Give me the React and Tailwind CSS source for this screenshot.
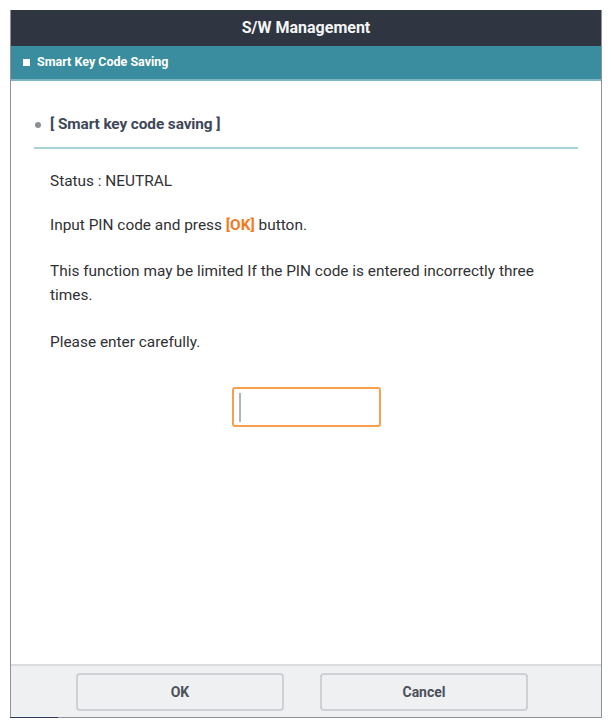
import React from "react";

export default function App() {
  return (
    <div className="w-[611px] h-[727px] bg-white pt-[10px] pl-[10px]" style={{ fontFamily: "Roboto, 'Liberation Sans', sans-serif" }}>
      <div className="w-[592px] h-[708px] flex flex-col border-l border-r border-b border-[#8f9296] relative">
        <div className="h-[36px] bg-[#2f3641] flex items-center justify-center text-[#f4f5f6] font-bold text-[16px]">
          S/W Management
        </div>
        <div className="h-[35px] bg-[#3a8d9e] border-b-2 border-[#7db6c2] flex items-center pl-[12px] gap-[7px]">
          <div className="w-[7px] h-[7px] bg-white"></div>
          <span className="text-white font-bold text-[12.5px]">Smart Key Code Saving</span>
        </div>
        <div className="flex-1 bg-white px-[23px] pt-[34px]">
          <div className="flex items-center h-[20px] pl-[1px]">
            <div className="w-[6px] h-[6px] rounded-full bg-[#8c9096]"></div>
            <span className="ml-[9px] font-bold text-[15.4px] text-[#3e4859] tracking-[-0.1px]">[ Smart key code saving ]</span>
          </div>
          <div className="mt-[12px] h-[2px] bg-[#a9d3db]"></div>
          <div className="pl-[16px] text-[15.4px] text-[#2f3134]">
            <div className="mt-[22px] leading-[20px]">Status : NEUTRAL</div>
            <div className="mt-[24px] leading-[20px]">
              Input PIN code and press <span className="text-[#f47a1f] font-bold">[OK]</span> button.
            </div>
            <div className="mt-[24px] leading-[24px] pr-[20px]">
              This function may be limited If the PIN code is entered incorrectly three times.
            </div>
            <div className="mt-[25px] leading-[20px]">Please enter carefully.</div>
          </div>
          <div className="mt-[35px] flex justify-center">
            <div className="w-[149px] h-[40px] border-2 border-[#f7a04c] rounded-[3px] flex items-center pl-[5px]">
              <div className="w-[2px] h-[29px] bg-[#b4b4b4]"></div>
            </div>
          </div>
        </div>
        <div className="h-[53px] bg-[#eff0f2] border-t-2 border-[#d9dbde] flex items-start pt-[7px] pl-[65px] gap-[36px]">
          <div className="w-[208px] h-[38px] border-2 border-[#cdd0d4] rounded-[4px] flex items-center justify-center font-bold text-[14px] text-[#4b505a]">
            OK
          </div>
          <div className="w-[208px] h-[38px] border-2 border-[#cdd0d4] rounded-[4px] flex items-center justify-center font-bold text-[14px] text-[#4b505a]">
            Cancel
          </div>
        </div>
        <div className="absolute left-[-1px] bottom-[-1px] w-[48px] h-[1px] bg-[#2f3a5a]"></div>
      </div>
    </div>
  );
}
